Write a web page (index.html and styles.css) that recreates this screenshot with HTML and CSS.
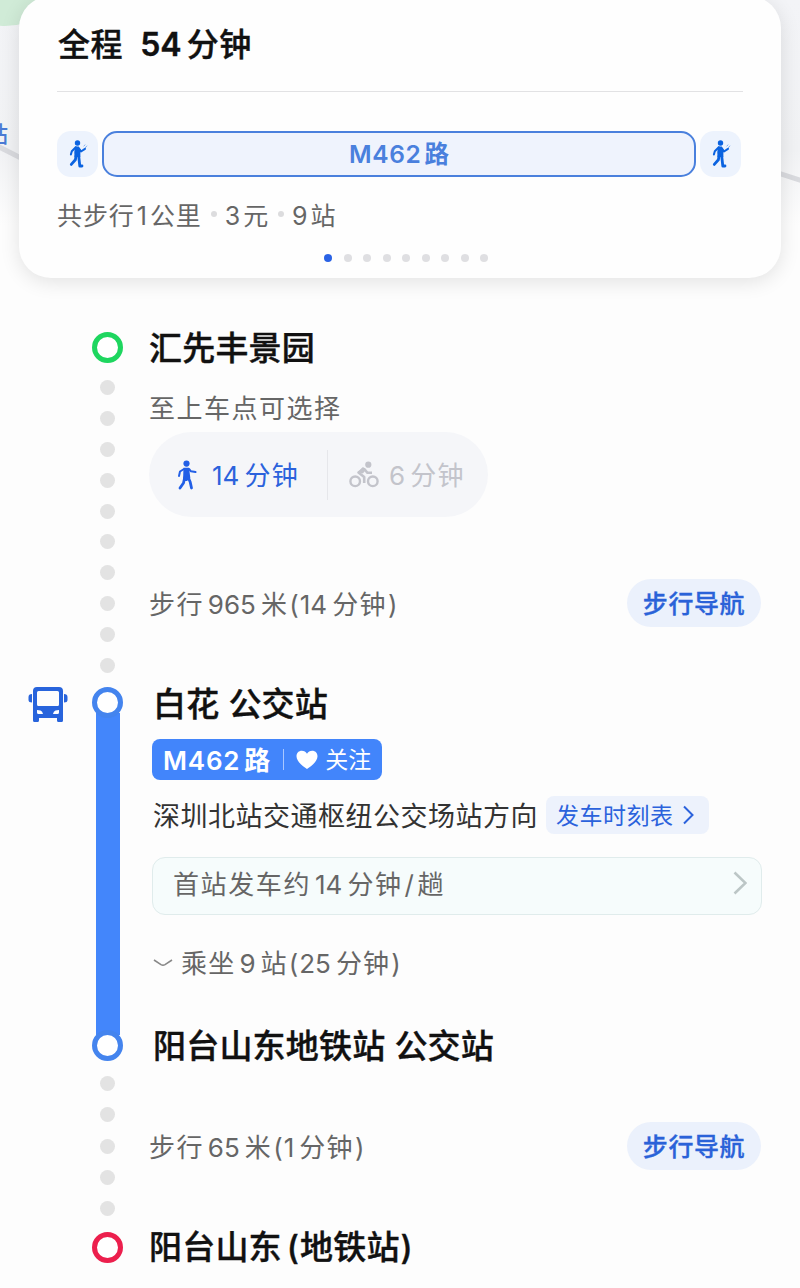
FILE: index.html
```html
<!DOCTYPE html>
<html lang="zh-CN">
<head>
    <meta charset="UTF-8">
    <meta name="viewport" content="width=device-width, initial-scale=1.0">
    <title>公交路线详情</title>
    <link rel="stylesheet" href="styles.css">
</head>
<body>
    <!-- Shared icons -->
    <svg class="icon-defs" width="0" height="0">
        <symbol id="icon-walk-go" viewBox="0 0 20 28">
            <circle cx="9.5" cy="3" r="2.7"/>
            <path d="M7.8 7.2L3.8 11.2L2.900 14.500" class="limb"/>
            <path d="M11 8.5L13 11.5L17 8.8" class="limb"/>
            <path d="M15.6 6.2L17.3 4.7M17.2 8L19 5.7" class="wave"/>
            <path d="M7 6.5H10.8L12.500 9.5L12.300 17H6.500L6.300 12Z"/>
            <path d="M8 16L7.4 19.8L3.3 24.4" class="leg"/>
            <path d="M10.7 16L11.8 26H14" class="leg"/>
        </symbol>
        <symbol id="icon-walk" viewBox="0 0 20 30">
            <circle cx="9.5" cy="3.6" r="3.1"/>
            <path d="M7 9L3 11.5L2 16" class="limb"/>
            <path d="M12 9L14 11.3L18.5 12" class="limb"/>
            <path d="M6.5 7.8H12L13.3 18L10 21H6Z"/>
            <path d="M7.6 18L6.5 23L3 28" class="leg"/>
            <path d="M11.3 17.5L13.2 22L14.5 28" class="leg"/>
        </symbol>
    </svg>

    <header class="map">
        <div class="map-park"></div>
        <div class="map-road left"></div>
        <div class="map-road right"></div>
        <span class="map-label">站</span>

        <div class="card">
            <h1 class="total">全程<span class="total-num">54</span>分钟</h1>
            <div class="route-bar">
                <div class="chip"><svg width="20" height="28"><use href="#icon-walk-go"/></svg></div>
                <div class="line-pill"><span class="line-no">M462</span>路</div>
                <div class="chip"><svg width="20" height="28"><use href="#icon-walk-go"/></svg></div>
            </div>
            <div class="summary">
                <span>共步行<b class="num">1</b>公里</span>
                <i class="sep"></i>
                <span><b class="num first">3</b>元</span>
                <i class="sep"></i>
                <span><b class="num first">9</b>站</span>
            </div>
            <div class="pager">
                <i class="active"></i><i></i><i></i><i></i><i></i><i></i><i></i><i></i><i></i>
            </div>
        </div>
    </header>

    <main class="route">
        <!-- Walk to the stop -->
        <section class="step walk-first">
            <div class="side"></div>
            <div class="rail">
                <span class="ring green"></span>
                <div class="dots">
                    <i></i><i></i><i></i><i></i><i></i><i></i><i></i><i></i><i></i><i></i>
                </div>
            </div>
            <div class="content">
                <h2 class="stop">汇先丰景园</h2>
                <p class="hint">至上车点可选择</p>
                <div class="modes">
                    <div class="mode active">
                        <svg width="20" height="30"><use href="#icon-walk"/></svg>
                        <span><b class="num first">14</b>分钟</span>
                    </div>
                    <div class="mode">
                        <svg width="30" height="28" viewBox="0 0 30 28">
                            <circle cx="6.2" cy="20.3" r="4.8" class="wheel"/>
                            <circle cx="23.8" cy="20.3" r="4.8" class="wheel"/>
                            <circle cx="19.3" cy="3.7" r="3.1"/>
                            <path d="M15.3 7.2L9.5 11.5L15.2 16V22" class="frame"/>
                            <path d="M14.8 7.5L18.5 11.8H23" class="frame"/>
                            <path d="M13.5 6.2L17.3 8.5L13.8 12.6L9.2 11Z"/>
                        </svg>
                        <span><b class="num first">6</b>分钟</span>
                    </div>
                </div>
                <div class="walk-row">
                    <span>步行<b class="num">965</b>米<b class="par">(</b><b class="num first">14</b>分钟<b class="par">)</b></span>
                    <button class="nav-btn">步行导航</button>
                </div>
            </div>
        </section>

        <!-- Bus ride -->
        <section class="step ride">
            <div class="side">
                <svg width="40" height="37" viewBox="0 0 40 37">
                    <path fill-rule="evenodd" d="M9 1H31Q35 1 35 5V34.5Q35 36 33.5 36H30.5Q29 36 29 34.5V32H11V34.5Q11 36 9.5 36H6.5Q5 36 5 34.5V5Q5 1 9 1ZM10.5 5Q9 5 9 6.5V18.5Q9 20 10.5 20H29.5Q31 20 31 18.5V6.5Q31 5 29.5 5Z"/>
                    <path d="M4 8V16.500Q0.500 16.500 0.500 14V11Q0.500 8 4 8ZM36 8V16.500Q39.500 16.500 39.500 14V11Q39.500 8 36 8Z"/>
                    <path class="lamp" d="M9 24L12.500 24.500Q14.500 25 15 28H10.500Q9 28 9 26.500ZM31 24L27.500 24.500Q25.500 25 25 28H29.500Q31 28 31 26.500Z"/>
                </svg>
            </div>
            <div class="rail">
                <span class="ring blue"></span>
                <div class="bar"></div>
                <span class="ring blue"></span>
            </div>
            <div class="content">
                <h2 class="stop">白花 公交站</h2>
                <div class="badge">
                    <span class="badge-line"><span class="line-no">M462</span>路</span>
                    <span class="follow">
                        <svg width="22" height="20" viewBox="0 0 22 20">
                            <path d="M11 19C8 17 0.500 12 0.500 6.300C0.500 3 2.800 0.800 5.800 0.800C8 0.800 10 2 11 3.800C12 2 14 0.800 16.200 0.800C19.200 0.800 21.500 3 21.500 6.300C21.500 12 14 17 11 19Z"/>
                        </svg>
                        关注
                    </span>
                </div>
                <div class="direction">
                    <span>深圳北站交通枢纽公交场站方向</span>
                    <a class="timetable"><span>发车时刻表</span>
                        <svg width="11" height="20" viewBox="0 0 11 20"><path d="M1 1.500L9.500 10L1 18.500"/></svg>
                    </a>
                </div>
                <div class="departure">
                    <span>首站发车约<b class="num">14</b>分钟<b class="slash">/</b>趟</span>
                    <svg width="14" height="24" viewBox="0 0 14 24"><path d="M1.500 1.500L12.500 12L1.500 22.500"/></svg>
                </div>
                <div class="stops">
                    <svg width="20" height="8" viewBox="0 0 20 8"><path d="M1 1L8 5.600Q10 6.800 12 5.600L19 1"/></svg>
                    <span>乘坐<b class="num">9</b>站<b class="par">(</b><b class="num first">25</b>分钟<b class="par">)</b></span>
                </div>
                <h2 class="stop">阳台山东地铁站 公交站</h2>
            </div>
        </section>

        <!-- Walk to the destination -->
        <section class="step walk-last">
            <div class="side"></div>
            <div class="rail">
                <div class="dots">
                    <i></i><i></i><i></i><i></i><i></i>
                </div>
                <span class="ring red"></span>
            </div>
            <div class="content">
                <div class="walk-row">
                    <span>步行<b class="num">65</b>米<b class="par">(</b><b class="num first">1</b>分钟<b class="par">)</b></span>
                    <button class="nav-btn">步行导航</button>
                </div>
                <h2 class="stop">阳台山东<b class="par">(</b>地铁站<b class="par">)</b></h2>
            </div>
        </section>
    </main>
</body>
</html>
```
FILE: styles.css
```css
* {
    box-sizing: border-box;
}

body {
    margin: 0;
    width: 800px;
    height: 1288px;
    overflow: hidden;
    background: #fdfdfd;
    color: #666;
    font-family: Inter, "Noto Sans CJK SC", sans-serif;
    font-size: 26px;
    letter-spacing: 1.4px;
}

h1, h2, p {
    margin: 0;
}

svg {
    display: block;
    flex: none;
}

b {
    font-weight: inherit;
}

.icon-defs {
    position: absolute;
}

.num {
    letter-spacing: 0;
    margin: 0 5px 0 4px;
}

.num.first {
    margin-left: 0;
}

.par {
    letter-spacing: 0;
    margin: 0 1px;
}

/* Map strip and summary card */
.map {
    position: relative;
    height: 328px;
    overflow: hidden;
    background: linear-gradient(#f3f4f7 0, #f1f2f4 150px, #fdfdfd 225px);
}

.map-park {
    position: absolute;
    left: -50px;
    top: -60px;
    width: 110px;
    height: 86px;
    border-radius: 50%;
    background: #d0ebd7;
}

.map-road {
    position: absolute;
    width: 40px;
    height: 5px;
    background: #d9dade;
}

.map-road.left {
    left: -10px;
    top: 150px;
    transform: rotate(27deg);
}

.map-road.right {
    left: 772px;
    top: 175px;
    transform: rotate(18deg);
}

.map-label {
    position: absolute;
    left: -14px;
    top: 120px;
    color: #4a7bd5;
    font-size: 22px;
    font-weight: 500;
    line-height: 28px;
    letter-spacing: 0;
}

.card {
    position: relative;
    height: 282px;
    margin: -4px 19px 0;
    padding: 28px 38px 0;
    border-radius: 32px;
    background: #fefefe;
    box-shadow: 0 4px 20px rgba(0, 0, 0, 0.11);
}

.total {
    height: 68px;
    padding: 1px 0 0 1px;
    border-bottom: 1px solid #e2e2e4;
    color: #111;
    font-size: 32px;
    font-weight: 500;
    line-height: 40px;
    letter-spacing: 0.6px;
    -webkit-text-stroke: 0.4px;
}

.total-num {
    margin: 0 5px 0 17px;
    font-weight: 600;
    letter-spacing: 0;
}

.route-bar {
    display: flex;
    gap: 4px;
    height: 46px;
    margin: 39px 2px 0 0;
}

.chip {
    display: flex;
    align-items: center;
    justify-content: center;
    width: 41px;
    border-radius: 14px;
    background: #edf3fd;
    color: #0b63e0;
    fill: #0b63e0;
}

.limb {
    fill: none;
    stroke: currentColor;
    stroke-width: 2;
    stroke-linecap: round;
    stroke-linejoin: round;
}

.leg {
    fill: none;
    stroke: currentColor;
    stroke-width: 2.8;
    stroke-linecap: round;
    stroke-linejoin: round;
}

.wave {
    fill: none;
    stroke: currentColor;
    stroke-width: 0.8;
    opacity: 0.6;
}

.line-pill {
    display: flex;
    align-items: center;
    justify-content: center;
    flex: 1;
    border: 2px solid #4a80dd;
    border-radius: 15px;
    background: #eff3fd;
    color: #4a80dd;
    font-size: 24.5px;
    font-weight: 600;
    line-height: 42px;
    letter-spacing: 0;
}

.line-no {
    margin-right: 3px;
    font-weight: 600;
    letter-spacing: 0.6px;
}

.summary {
    display: flex;
    align-items: center;
    height: 36px;
    margin-top: 19px;
    font-size: 25px;
    letter-spacing: 0.9px;
}

.summary .num {
    margin: 0 3px 0 2px;
}

.summary .num.first {
    margin-left: 0;
}

.sep {
    width: 6px;
    height: 6px;
    margin: 0 8px 0 9px;
    border-radius: 50%;
    background: #dcdcde;
}

.pager {
    display: flex;
    justify-content: space-between;
    width: 164px;
    margin: 22px 0 0 267px;
}

.pager i {
    width: 8px;
    height: 8px;
    border-radius: 50%;
    background: #dfdfe2;
}

.pager .active {
    background: #2a62e5;
}

/* Route steps */
.step {
    display: grid;
    grid-template-columns: 40px 31px 1fr;
    column-gap: 24px;
    padding: 0 38px 0 28px;
}

.walk-first {
    height: 355px;
}

.ride {
    height: 383px;
}

.rail {
    display: flex;
    flex-direction: column;
    align-items: center;
    padding-top: 4px;
}

.ring {
    flex: none;
    position: relative;
    width: 31px;
    height: 31px;
    border: 5px solid;
    border-radius: 50%;
    background: #fff;
}

.ring.green {
    border-color: #1ed65f;
}

.ring.blue {
    border-color: #4484ee;
}

.ring.red {
    border-color: #ec1f4d;
}

.dots {
    display: flex;
    flex-direction: column;
    justify-content: space-between;
    height: 293px;
    margin-top: 17px;
}

.dots i {
    width: 15px;
    height: 15px;
    border-radius: 50%;
    background: #e3e3e3;
}

.bar {
    width: 24px;
    height: 322px;
    margin: -5px 0;
    background: #4386fb;
}

.content {
    padding-left: 2px;
}

.ride .content {
    padding-left: 6px;
}

.stop {
    height: 40px;
    color: #111;
    font-size: 33px;
    font-weight: 500;
    line-height: 40px;
    letter-spacing: 0.2px;
    white-space: nowrap;
    -webkit-text-stroke: 0.4px;
}

.ride .stop:first-child {
    padding-top: 1px;
}

.stop .par:first-child {
    margin-left: 5px;
}

.hint {
    height: 36px;
    margin-top: 22px;
    line-height: 37px;
    letter-spacing: 1.5px;
}

.modes {
    display: flex;
    align-items: center;
    width: 339px;
    height: 85px;
    margin-top: 6px;
    border-radius: 43px;
    background: #f5f6f9;
}

.mode {
    display: flex;
    align-items: center;
    gap: 10px;
    height: 50px;
    padding-left: 21px;
    border-left: 1px solid #e6e7eb;
    color: #c3c4cb;
    fill: #c3c4cb;
}

.mode span {
    padding-bottom: 2px;
}

.mode.active {
    gap: 15px;
    width: 178px;
    padding-left: 28px;
    border: 0;
    color: #2b62dc;
    fill: #225fe6;
}

.mode.active svg {
    color: #225fe6;
}

.wheel {
    fill: none;
    stroke: #c3c4cb;
    stroke-width: 2.4;
}

.frame {
    fill: none;
    stroke: #c3c4cb;
    stroke-width: 2.6;
    stroke-linejoin: round;
}

.walk-row {
    display: flex;
    align-items: center;
    justify-content: space-between;
    height: 48px;
    margin-top: 62px;
}

.walk-row span {
    padding-bottom: 2px;
}

.nav-btn {
    width: 134px;
    height: 48px;
    margin-right: 1px;
    padding: 0 0 2px;
    border: 0;
    border-radius: 24px;
    background: #ebf1fc;
    color: #2a62d8;
    font: inherit;
    font-weight: 500;
    font-size: 25px;
    letter-spacing: 0.6px;
    -webkit-text-stroke: 0.3px;
}

.side svg {
    margin-top: 3px;
    fill: #2864dc;
}

.side .lamp {
    fill: #fff;
}

.badge {
    display: flex;
    align-items: center;
    width: 230px;
    height: 41px;
    margin: 16px 0 0 -1px;
    padding-left: 11px;
    border-radius: 8px;
    background: #4285fb;
    color: #fff;
    fill: #fff;
    letter-spacing: 0;
}

.badge-line {
    padding-bottom: 2px;
    font-size: 26px;
    font-weight: 600;
}

.badge-line .line-no {
    margin-right: 4px;
    letter-spacing: 0.8px;
}

.follow {
    display: flex;
    align-items: center;
    gap: 7px;
    height: 21px;
    margin-left: 13px;
    padding-left: 12px;
    border-left: 1px solid #a9c7ff;
    font-size: 23px;
    line-height: 20px;
}

.direction {
    display: flex;
    align-items: center;
    height: 38px;
    margin-top: 16px;
    color: #333;
    font-size: 27px;
    letter-spacing: 0.5px;
    white-space: nowrap;
}

.direction span {
    padding-bottom: 2px;
}

.timetable {
    display: flex;
    align-items: center;
    gap: 9px;
    width: 163px;
    height: 38px;
    margin-left: 8px;
    padding-left: 10px;
    border-radius: 8px;
    background: #edf2fc;
    color: #2b62dc;
    font-size: 23px;
}

.timetable svg {
    fill: none;
    stroke: #2b62dc;
    stroke-width: 2;
}

.departure {
    display: flex;
    align-items: center;
    justify-content: space-between;
    height: 58px;
    margin: 23px 0 0 -1px;
    padding: 0 15px 8px 20px;
    border: 1px solid #e0ecec;
    border-radius: 13px;
    background: #f6fcfc;
    letter-spacing: 1.6px;
}

.departure svg {
    margin: 1px -1px 0 0;
    fill: none;
    stroke: #bcc6c6;
    stroke-width: 2.6;
}

.slash {
    margin: 0 2px;
}

.stops {
    display: flex;
    align-items: center;
    gap: 8px;
    height: 36px;
    margin: 30px 0 45px;
    letter-spacing: 1.2px;
}

.stops span {
    padding-bottom: 3px;
}

.stops svg {
    fill: none;
    stroke: #888;
    stroke-width: 1.6;
}

.walk-last .rail {
    padding-top: 10px;
}

.walk-last .dots {
    height: 140px;
    margin: 0 0 16px;
}

.walk-last .walk-row {
    margin: 56px 0 57px;
}
```
